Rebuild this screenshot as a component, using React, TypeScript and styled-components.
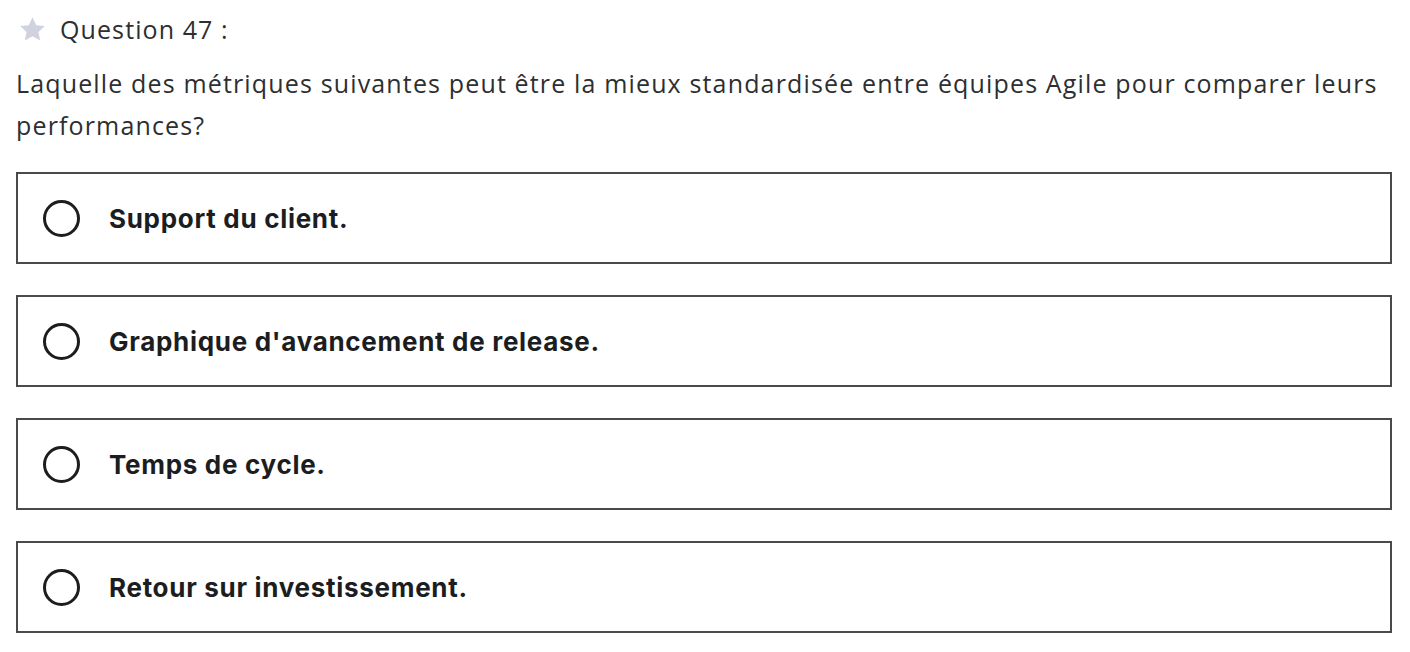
import React from "react";
import styled, { createGlobalStyle } from "styled-components";

const Global = createGlobalStyle`
  html, body { margin: 0; padding: 0; background: #ffffff; }
  body { font-family: "Open Sans", "Liberation Sans", sans-serif; color: #2d2f31; }
`;

const Page = styled.div`
  width: 1410px;
  height: 652px;
  box-sizing: border-box;
  padding: 12px 18px 0 16px;
  display: flex;
  flex-direction: column;
  overflow: hidden;
`;

const Header = styled.div`
  display: flex;
  align-items: center;
  gap: 13px;
  height: 34px;
  padding-left: 2px;
`;

const HeaderTitle = styled.span`
  font-size: 25px;
  letter-spacing: 1.1px;
  color: #2d2f31;
`;

const Prompt = styled.p`
  margin: 16px 0 0 0;
  font-size: 25px;
  letter-spacing: 1.15px;
  line-height: 42px;
  color: #2d2f31;
`;

const Options = styled.div`
  display: flex;
  flex-direction: column;
  gap: 31px;
  margin-top: 26px;
`;

const Option = styled.label`
  display: flex;
  align-items: center;
  gap: 29px;
  height: 92px;
  box-sizing: border-box;
  border: 2px solid #4a4a4a;
  padding: 0 0 0 25px;
  cursor: pointer;
`;

const Radio = styled.span`
  width: 37px;
  height: 37px;
  box-sizing: border-box;
  border: 3.5px solid #1c1d1f;
  border-radius: 50%;
  flex: none;
`;

const OptionText = styled.span`
  font-family: Inter, "Liberation Sans", sans-serif;
  font-weight: 700;
  font-size: 26px;
  color: #1c1d1f;
  letter-spacing: 0.7px;
`;

const Star = () => (
  <svg width="29" height="29" viewBox="0 0 24 24" aria-hidden>
    <path
      d="M12 1.8l3.1 6.6 7.1.8-5.3 4.9 1.5 7.1L12 17.6l-6.4 3.6 1.5-7.1L1.8 9.2l7.1-.8z"
      fill="#d1d2e0"
    />
  </svg>
);

const answers = [
  "Support du client.",
  "Graphique d'avancement de release.",
  "Temps de cycle.",
  "Retour sur investissement.",
];

export default function App() {
  return (
    <>
      <Global />
      <Page>
        <Header>
          <Star />
          <HeaderTitle>Question 47 :</HeaderTitle>
        </Header>
        <Prompt>
          Laquelle des métriques suivantes peut être la mieux standardisée entre équipes Agile pour comparer leurs performances?
        </Prompt>
        <Options>
          {answers.map((a) => (
            <Option key={a}>
              <Radio />
              <OptionText>{a}</OptionText>
            </Option>
          ))}
        </Options>
      </Page>
    </>
  );
}
